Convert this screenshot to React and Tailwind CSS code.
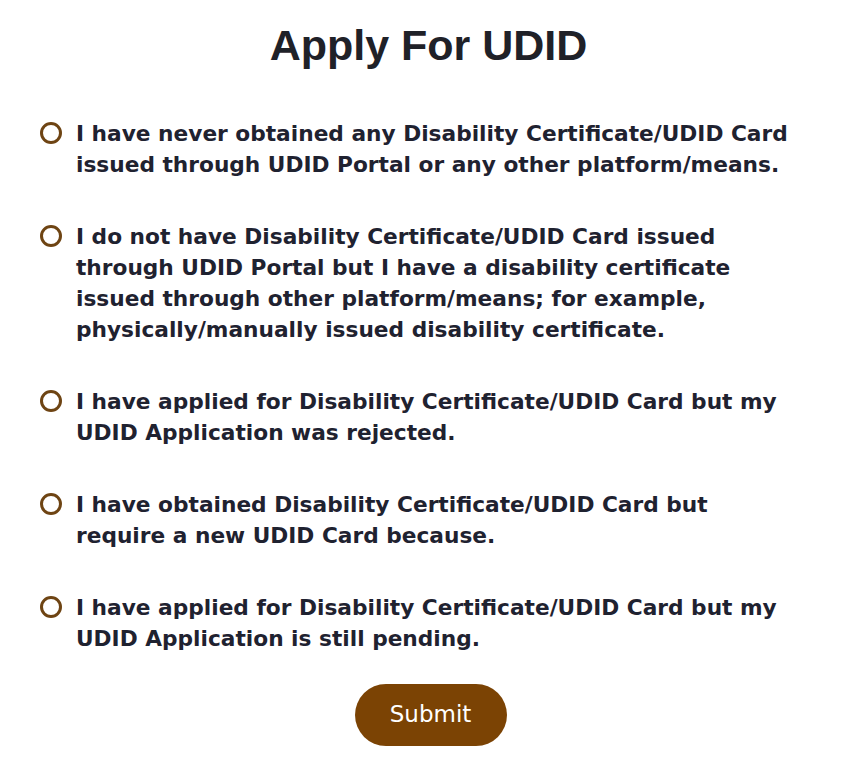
import React, { useState } from 'react';

const options = [
  'I have never obtained any Disability Certificate/UDID Card issued through UDID Portal or any other platform/means.',
  'I do not have Disability Certificate/UDID Card issued through UDID Portal but I have a disability certificate issued through other platform/means; for example, physically/manually issued disability certificate.',
  'I have applied for Disability Certificate/UDID Card but my UDID Application was rejected.',
  'I have obtained Disability Certificate/UDID Card but require a new UDID Card because.',
  'I have applied for Disability Certificate/UDID Card but my UDID Application is still pending.',
];

const ApplyUdid = () => {
  const [selected, setSelected] = useState(null);

  return (
    <div className="bg-white min-h-screen w-[857px] pt-[18px] font-['DejaVu_Sans',sans-serif]">
      {/* Title */}
      <h1 className="text-center text-[43px] leading-[54px] font-bold text-[#1f2128] font-['Liberation_Sans',Arial,sans-serif]">
        Apply For UDID
      </h1>

      {/* Options */}
      <div className="mt-[46px] pl-[40px] flex flex-col gap-[41px]">
        {options.map((text, i) => (
          <label key={i} className="flex items-start gap-[14px] cursor-pointer">
            <input
              type="radio"
              name="udid"
              checked={selected === i}
              onChange={() => setSelected(i)}
              className="sr-only"
            />
            <span className="mt-[4px] w-[22px] h-[22px] shrink-0 rounded-full border-[3px] border-[#6e4413] flex items-center justify-center">
              {selected === i && <span className="w-[10px] h-[10px] rounded-full bg-[#7b4304]" />}
            </span>
            <span className="w-[722px] text-[21.7px] leading-[31px] font-bold text-[#1f2230]">
              {text}
            </span>
          </label>
        ))}
      </div>

      {/* Submit */}
      <div className="flex justify-center mt-[30px] pl-[4px]">
        <button className="w-[152px] h-[62px] rounded-full bg-[#7b4304] text-white text-[23px] pb-[2px]">
          Submit
        </button>
      </div>
    </div>
  );
};

export default ApplyUdid;
